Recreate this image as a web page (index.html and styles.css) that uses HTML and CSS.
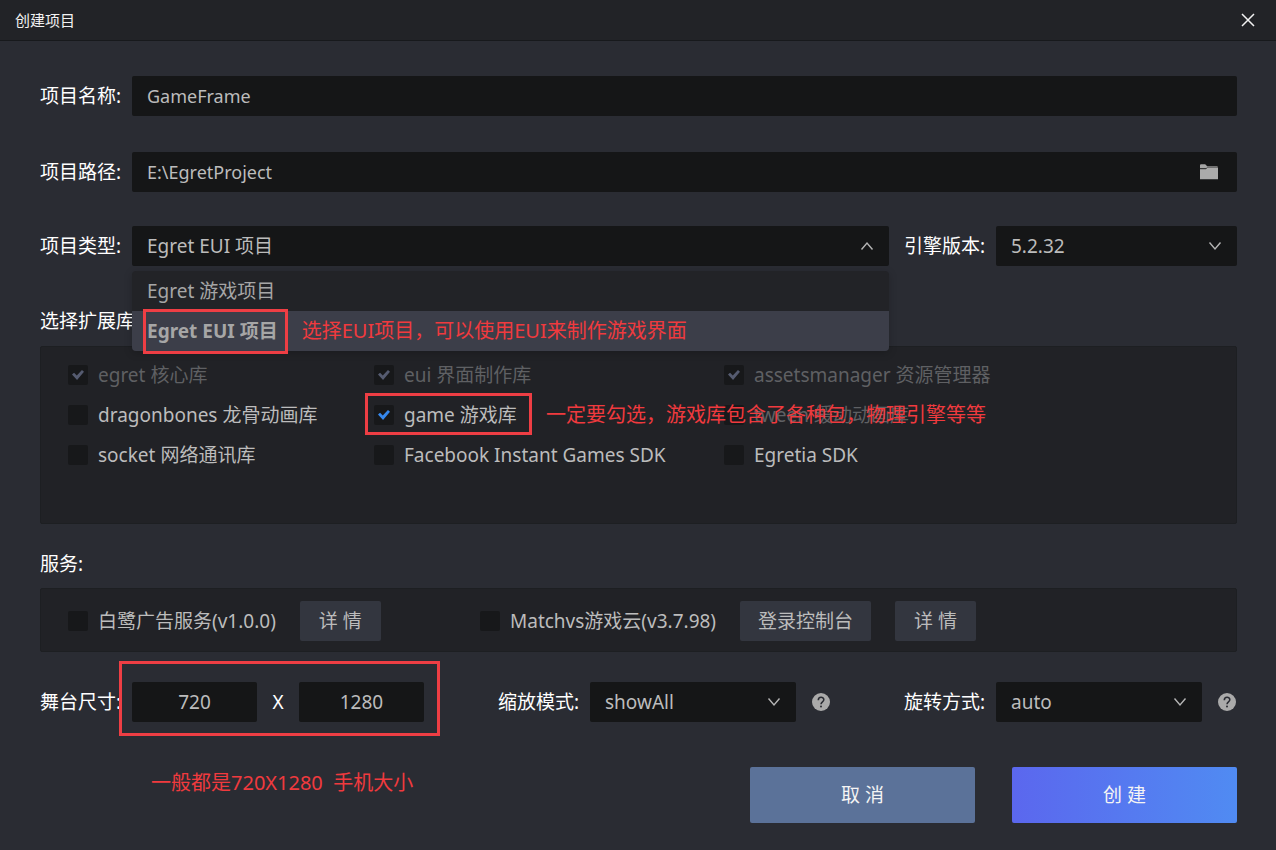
FILE: index.html
```html
<!DOCTYPE html>
<html lang="zh-CN">
<head>
<meta charset="utf-8">
<title>创建项目</title>
<link rel="stylesheet" href="styles.css">
</head>
<body>
<header class="titlebar">
  <h1 class="title">创建项目</h1>
  <button class="close" type="button" aria-label="关闭">
    <svg width="14" height="14" viewBox="0 0 14 14"><path d="M1 1L13 13M13 1L1 13" fill="none" stroke="currentColor" stroke-width="1.5"/></svg>
  </button>
</header>
<form class="form">
  <div class="row row-name">
    <label class="label" for="name">项目名称:</label>
    <input class="field text grow" id="name" type="text" value="GameFrame">
  </div>
  <div class="row row-path">
    <label class="label" for="path">项目路径:</label>
    <div class="control grow">
      <input class="field text" id="path" type="text" value="E:\EgretProject">
      <button class="browse" type="button" aria-label="浏览">
        <svg width="18" height="16" viewBox="0 0 18 16"><path d="M0 1.2Q0 .2 1 .2H5.2L7.2 2.2H17.5V4H0Z" fill="#a5a5a5"/><path d="M0 5H6L7.5 3.2H18V15.2H0Z" fill="#ababab"/><path d="M0 4.8H6L7.5 3.2H18" fill="none" stroke="#4c4c4c" stroke-width=".9"/></svg>
      </button>
    </div>
  </div>
  <div class="row row-type">
    <label class="label" for="type">项目类型:</label>
    <div class="control grow">
      <select class="field" id="type"><option>Egret EUI 项目</option><option>Egret 游戏项目</option></select>
      <svg class="chevron" width="14" height="10" viewBox="0 0 14 10"><path d="M1.5 8.5L7 2L12.5 8.5" fill="none" stroke="currentColor" stroke-width="1.4"/></svg>
      <ul class="menu">
        <li class="menu-item">Egret 游戏项目</li>
        <li class="menu-item active"><span class="marked">Egret EUI 项目<span class="frame frame-option"></span></span><span class="note">选择EUI项目，可以使用EUI来制作游戏界面</span></li>
      </ul>
    </div>
    <label class="label label-second" for="engine">引擎版本:</label>
    <div class="control engine">
      <select class="field" id="engine"><option>5.2.32</option></select>
      <svg class="chevron" width="14" height="10" viewBox="0 0 14 10"><path d="M1.5 1.5L7 8L12.5 1.5" fill="none" stroke="currentColor" stroke-width="1.4"/></svg>
    </div>
  </div>
  <h2 class="heading heading-libs">选择扩展库:</h2>
  <div class="panel libs">
    <label class="check disabled"><input type="checkbox" checked disabled>egret 核心库</label>
    <label class="check disabled"><input type="checkbox" checked disabled>eui 界面制作库</label>
    <label class="check disabled"><input type="checkbox" checked disabled>assetsmanager 资源管理器</label>
    <label class="check"><input type="checkbox">dragonbones 龙骨动画库</label>
    <div class="marked">
      <label class="check"><input type="checkbox" checked>game 游戏库</label>
      <span class="frame frame-game"></span>
      <span class="note note-game">一定要勾选，游戏库包含了各种包，物理引擎等等</span>
    </div>
    <label class="check disabled"><input type="checkbox" disabled>tween 缓动动画库</label>
    <label class="check"><input type="checkbox">socket 网络通讯库</label>
    <label class="check"><input type="checkbox">Facebook Instant Games SDK</label>
    <label class="check"><input type="checkbox">Egretia SDK</label>
  </div>
  <h2 class="heading heading-services">服务:</h2>
  <div class="panel services">
    <div class="service">
      <label class="check"><input type="checkbox">白鹭广告服务(v1.0.0)</label>
      <button class="small" type="button">详 情</button>
    </div>
    <div class="service">
      <label class="check"><input type="checkbox">Matchvs游戏云(v3.7.98)</label>
      <button class="small" type="button">登录控制台</button>
      <button class="small" type="button">详 情</button>
    </div>
  </div>
  <div class="stage">
    <div class="group">
      <label class="label" for="width">舞台尺寸:</label>
      <div class="sizes marked">
        <input class="field size" id="width" type="text" value="720">
        <span class="times">X</span>
        <input class="field size" type="text" value="1280" aria-label="高度">
        <span class="frame frame-size"></span>
        <span class="note note-size">一般都是720X1280&nbsp; 手机大小</span>
      </div>
    </div>
    <div class="group">
      <label class="label" for="scale">缩放模式:</label>
      <div class="control mode">
        <select class="field" id="scale"><option>showAll</option></select>
        <svg class="chevron" width="14" height="10" viewBox="0 0 14 10"><path d="M1.5 1.5L7 8L12.5 1.5" fill="none" stroke="currentColor" stroke-width="1.4"/></svg>
      </div>
      <button class="help" type="button" aria-label="缩放模式说明"><svg width="18" height="18" viewBox="0 0 18 18"><circle cx="9" cy="9" r="9" fill="#aaa"/><path d="M6.3 7.2C6.3 3.4 11.8 3.4 11.8 6.8C11.8 8.9 9 8.7 9 11.2" fill="none" stroke="#2a2c33" stroke-width="1.6"/><circle cx="9" cy="13.5" r="1" fill="#2a2c33"/></svg></button>
    </div>
    <div class="group">
      <label class="label" for="rotate">旋转方式:</label>
      <div class="control mode">
        <select class="field" id="rotate"><option>auto</option></select>
        <svg class="chevron" width="14" height="10" viewBox="0 0 14 10"><path d="M1.5 1.5L7 8L12.5 1.5" fill="none" stroke="currentColor" stroke-width="1.4"/></svg>
      </div>
      <button class="help" type="button" aria-label="旋转方式说明"><svg width="18" height="18" viewBox="0 0 18 18"><circle cx="9" cy="9" r="9" fill="#aaa"/><path d="M6.3 7.2C6.3 3.4 11.8 3.4 11.8 6.8C11.8 8.9 9 8.7 9 11.2" fill="none" stroke="#2a2c33" stroke-width="1.6"/><circle cx="9" cy="13.5" r="1" fill="#2a2c33"/></svg></button>
    </div>
  </div>
  <div class="actions">
    <button class="action cancel" type="button">取 消</button>
    <button class="action create" type="submit">创 建</button>
  </div>
</form>
</body>
</html>
```
FILE: styles.css
```css
* { box-sizing: border-box; }

body {
  margin: 0;
  min-height: 100vh;
  background: #2a2c33;
  color: #bcbcbc;
  font: 19px/40px "Noto Sans", "Noto Sans CJK SC", sans-serif;
}

button, input, select { font: inherit; color: inherit; }

button {
  border: 0;
  padding: 0;
  background: none;
}

.titlebar {
  display: flex;
  justify-content: space-between;
  align-items: center;
  height: 41px;
  padding: 0 21px 0 15px;
  background: #222327;
  border-bottom: 1px solid #17191c;
  color: #f2f2f2;
}

.title {
  margin: 0;
  font-size: 15px;
  font-weight: 400;
}

.close { display: flex; }

.form { padding: 35px 39px 27px 40px; }

.row, .group { display: flex; align-items: center; }

.row-name { margin-bottom: 36px; }
.row-path { margin-bottom: 34px; }

.label {
  flex: none;
  width: 92px;
  color: #fff;
  white-space: nowrap;
}

.label-second { margin-left: 15px; }

.grow { flex: 1; min-width: 0; }

.control { position: relative; }

.field {
  display: block;
  width: 100%;
  height: 40px;
  padding: 0 15px;
  border: 0;
  border-radius: 2px;
  background: #151617;
  appearance: none;
}

.text { font-size: 18px; }

.chevron {
  position: absolute;
  right: 15px;
  top: 15px;
  color: #b5b5b5;
  pointer-events: none;
}

.browse {
  position: absolute;
  right: 19px;
  top: 12px;
  display: flex;
}

.engine { width: 241px; }

.menu {
  position: absolute;
  z-index: 2;
  top: 45px;
  left: 0;
  right: 0;
  margin: 0;
  padding: 0;
  list-style: none;
  background: #222327;
  border-radius: 4px;
  box-shadow: 0 2px 8px #0003;
}

.menu-item {
  display: flex;
  gap: 24px;
  height: 40px;
  padding: 0 15px;
  color: #a6a6a6;
}

.active {
  background: #3c3e49;
  border-radius: 0 0 4px 4px;
  font-weight: 700;
}

.marked { position: relative; }

.frame {
  position: absolute;
  border: 3px solid #ee3e44;
  pointer-events: none;
}

.frame-option { inset: -2px -10px -3px -4px; }
.frame-game { top: -2px; left: -9px; width: 167px; height: 42px; }
.frame-size { inset: -21px -16px -14px -13px; }

.note {
  color: #f03a3e;
  font-size: 20px;
  font-weight: 400;
  white-space: nowrap;
}

.note-game { position: absolute; z-index: 1; top: 0; left: 172px; }
.note-size { position: absolute; top: 81px; left: 19px; }

.heading {
  margin: 0;
  color: #fff;
  font-size: 19px;
  font-weight: 400;
}

.heading-libs { margin: 35px 0 5px; }
.heading-services { margin: 20px 0 4px; }

.panel {
  background: #212226;
  border: 1px solid #1d1f22;
  border-radius: 2px;
}

.libs {
  display: grid;
  grid-template-columns: 306px 350px 1fr;
  grid-auto-rows: 40px;
  padding: 8px 27px 48px;
}

.check {
  display: flex;
  align-items: center;
  gap: 10px;
  white-space: nowrap;
}

.check input {
  flex: none;
  width: 20px;
  height: 20px;
  margin: 0;
  appearance: none;
  background: #17181a;
  border-radius: 2px;
  display: grid;
  place-items: center;
  color: #3588ee;
}

.check input:checked::before {
  content: "";
  width: 12px;
  height: 10px;
  background: currentColor;
  clip-path: polygon(0 45%, 17% 28%, 40% 55%, 83% 0, 100% 17%, 42% 100%);
}

.disabled { color: #5f6063; }
.check input:disabled { color: #555b70; }

.services {
  display: grid;
  grid-template-columns: 412px 1fr;
  padding: 12px 27px 10px;
}

.service { display: flex; gap: 24px; }

.small {
  min-width: 81px;
  height: 40px;
  padding: 0 18px;
  border-radius: 2px;
  background: #33363f;
  white-space: nowrap;
}

.stage {
  display: flex;
  justify-content: space-between;
  margin: 30px 0 45px;
  padding-right: 1px;
}

.sizes { display: flex; }

.size { width: 125px; text-align: center; }

.times {
  width: 42px;
  color: #fff;
  text-align: center;
}

.mode { width: 206px; margin-right: 16px; }

.help { display: flex; }

.actions {
  display: flex;
  justify-content: flex-end;
  gap: 37px;
}

.action {
  width: 225px;
  height: 56px;
  border-radius: 2px;
  color: #f4f4f4;
}

.cancel { background: #5b7299; }
.create { background: linear-gradient(90deg, #5b67ee, #508bf2); }
```
